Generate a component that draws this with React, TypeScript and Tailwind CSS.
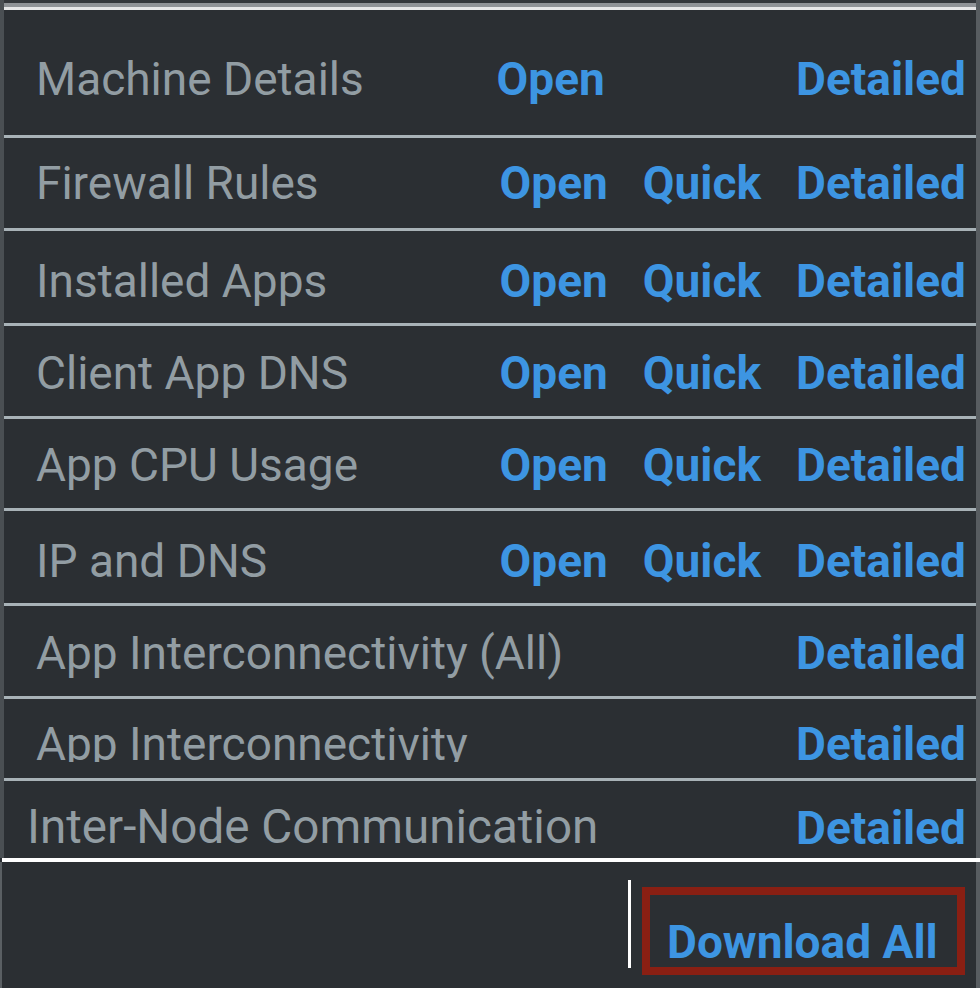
import React from "react";

type Row = {
  label: string;
  h: string;
  pt: string;
  open?: boolean;
  quick?: boolean;
  first?: boolean;
  clip?: boolean;
  last?: boolean;
};

const rows: Row[] = [
  { label: "Machine Details", h: "h-[125px]", pt: "pt-[46px]", open: true, first: true },
  { label: "Firewall Rules", h: "h-[90px]", pt: "pt-[22px]", open: true, quick: true },
  { label: "Installed Apps", h: "h-[92px]", pt: "pt-[27px]", open: true, quick: true },
  { label: "Client App DNS", h: "h-[90px]", pt: "pt-[24px]", open: true, quick: true },
  { label: "App CPU Usage", h: "h-[89px]", pt: "pt-[23px]", open: true, quick: true },
  { label: "IP and DNS", h: "h-[92px]", pt: "pt-[27px]", open: true, quick: true },
  { label: "App Interconnectivity (All)", h: "h-[90px]", pt: "pt-[24px]" },
  { label: "App Interconnectivity", h: "h-[79px]", pt: "pt-[22px]", clip: true },
  { label: "Inter-Node Communication", h: "h-[77px]", pt: "pt-[23px]", last: true },
];

function Link({ children, className = "" }: { children: React.ReactNode; className?: string }) {
  return (
    <span className={"font-bold text-[#3d95e2] leading-none whitespace-nowrap " + className}>
      {children}
    </span>
  );
}

export default function App() {
  return (
    <div className="w-[980px] h-[988px] bg-[#2b2f33] flex flex-col overflow-hidden font-['Roboto','Liberation_Sans',sans-serif] text-[46px]">
      <div className="flex flex-col h-[858px] border-l-4 border-l-[#4a4f53] border-r-4 border-r-[#585d61]">
        <div className="h-[3px] bg-[#33373b]" />
        <div className="h-[4px] bg-[#8f9397]" />
        <div className="h-[3px] bg-[#e6e7e8]" />
        {rows.map((r, i) => (
          <React.Fragment key={r.label}>
            {i > 0 && <div className="h-[3px] bg-[#a8b2b7]" />}
            <div
              className={`flex items-start ${r.h} ${r.pt} ${
                r.last ? "pl-[23px]" : "pl-[32px]"
              } pr-[10px]`}
            >
              <div
                className={`flex-1 text-[#929da3] leading-none whitespace-nowrap ${
                  r.clip ? "h-[41px] overflow-hidden" : ""
                } ${r.last ? "text-[47.6px]" : ""}`}
              >
                {r.label}
              </div>
              <div className="flex items-start gap-[35px]">
                {r.open && <Link className={r.first ? "mr-[3px]" : ""}>Open</Link>}
                {r.first && <Link className="invisible">Quick</Link>}
                {r.quick && <Link>Quick</Link>}
                <Link className={r.last ? "mt-[1px]" : ""}>Detailed</Link>
              </div>
            </div>
          </React.Fragment>
        ))}
      </div>
      <div className="h-[4px] ml-[2px] bg-white" />
      <div className="flex-1 flex justify-end items-start border-l-2 border-l-[#5a5f63] border-r-4 border-r-[#585d61] pr-[11px]">
        <div className="mt-[18px] h-[88px] w-[3px] bg-white mr-[11px]" />
        <div className="mt-[25px] h-[88px] w-[323px] border-[8px] border-[#891f13] pt-[24px] pl-[17px] flex items-start leading-none">
          <Link>Download All</Link>
        </div>
      </div>
    </div>
  );
}
